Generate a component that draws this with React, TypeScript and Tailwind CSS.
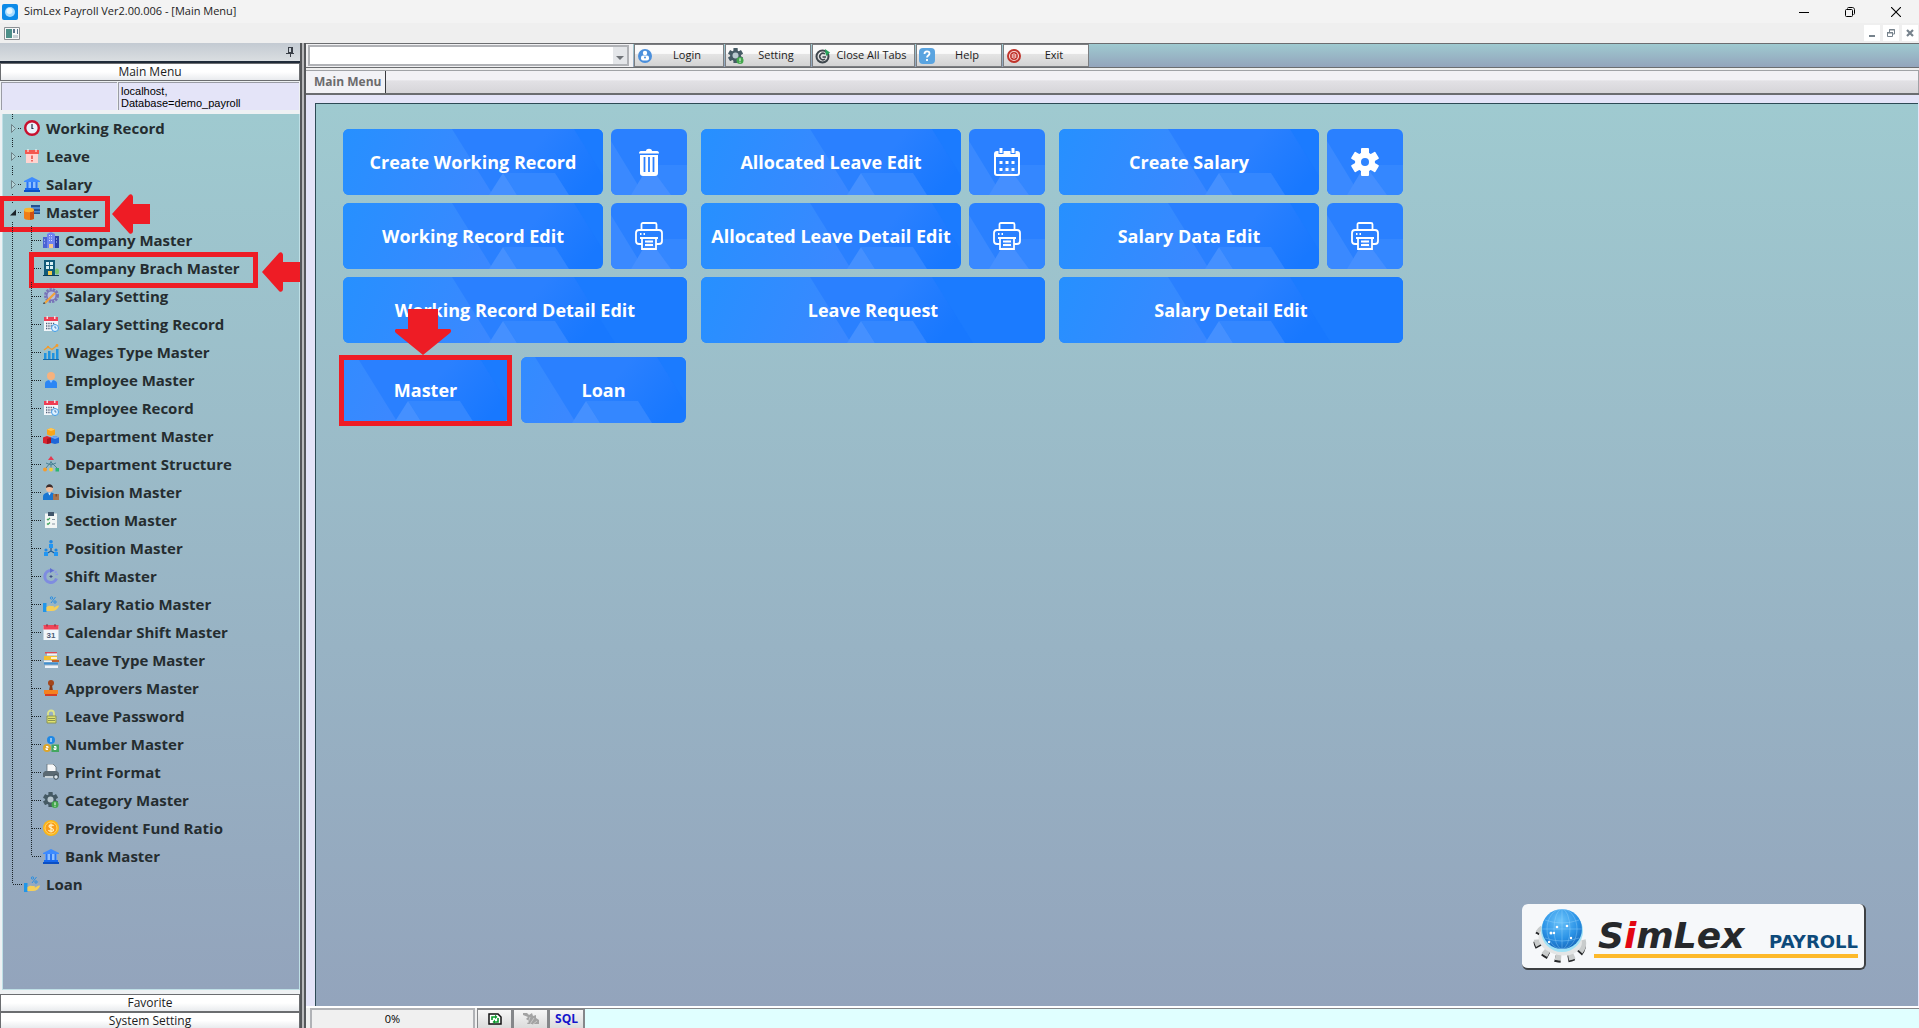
import type { ReactNode } from "react";
import clsx from "clsx";

const gearTeeth = (fill: string) => (
  <g fill={fill}>
    <circle cx="14" cy="14" r="10" />
    <rect x="10" y="0" width="8" height="28" rx="1" />
    <rect x="10" y="0" width="8" height="28" rx="1" transform="rotate(60 14 14)" />
    <rect x="10" y="0" width="8" height="28" rx="1" transform="rotate(120 14 14)" />
  </g>
);

const bank = (
  <>
    <path d="M8 1 16 5v1H0V5z" fill="#3d8bff" />
    <path d="M2 6h12v7H2z" fill="#8fc0ff" />
    <path d="M2.500 6h2v7h-2zM7 6h2v7H7zM11.500 6h2v7h-2z" fill="#2b76f2" />
    <path d="M1 12h14v2H1z" fill="#1668ee" />
    <path d="M0 14h16v2H0z" fill="#0b4fc4" />
  </>
);

const calendarClock = (
  <>
    <path d="M1 3h14v12H1z" fill="#f3f7fb" />
    <path d="M1 1h14v4H1z" fill="#ee3e54" />
    <path d="M3.500 0h1.500v3H3.500zM11 0h1.500v3H11z" fill="#f7d9de" />
    <path d="M3 7.500h9M3 10h7M3 12.500h5" stroke="#53617a" strokeWidth="1.300" strokeDasharray="1.300 1" />
    <circle cx="12" cy="12" r="3.500" fill="#dff1ff" stroke="#3f9be6" />
    <path d="M12 10v2h1.500" stroke="#2d6cb0" fill="none" strokeWidth=".8" />
  </>
);

const handPercent = (
  <>
    <path d="M0 7h3.500v9H0z" fill="#2196e8" />
    <path d="M3.500 11c3-2 4-1 6-1s2 1 1 2c3-2 4.500-3 5.500-2-1 3-4 5-7 5H3.500z" fill="#f5cf58" />
    <circle cx="8.500" cy="2" r="1.200" fill="none" stroke="#2d8fe0" />
    <circle cx="12" cy="6" r="1.200" fill="none" stroke="#2d8fe0" />
    <path d="M12.500 1 8 7" stroke="#2d8fe0" />
  </>
);

const gearAlert = (
  <>
    <g transform="scale(.54)">{gearTeeth("#455a64")}</g>
    <circle cx="7.500" cy="7.500" r="3" fill="#b9c8cf" />
    <circle cx="12" cy="12.500" r="3.500" fill="#43a74c" />
    <path d="M12 10.300v2.700M12 13.700v1" stroke="#fff" />
  </>
);

const icons: Record<string, ReactNode> = {
  clock: (
    <>
      <circle cx="8" cy="8" r="6.800" fill="#e9f2fb" stroke="#c8102e" strokeWidth="2.400" />
      <path d="M8 4v4.500h1.500" stroke="#25334a" strokeWidth="1.200" fill="none" />
    </>
  ),
  leave: (
    <>
      <path d="M2 3h12v12H2z" fill="#ffd4d1" />
      <path d="M1 2h14v4H1z" fill="#f4574f" />
      <path d="M4 1v3M12 1v3" stroke="#fff" />
      <path d="M8 7.500v3.500M8 12v1.500" stroke="#e3342b" strokeWidth="1.300" />
    </>
  ),
  bank,
  master: (
    <>
      <path d="M7 1h9v9H7z" fill="#24508f" />
      <path d="M7 3h9v2H7zM10 7h6v1.500h-6z" fill="#4e87cf" />
      <path d="M0 6v8c0 2.500 10 2.500 10 0V6z" fill="#ef7d17" />
      <path d="M6 7h4v8l-4 1z" fill="#cf4f12" />
      <ellipse cx="5" cy="6" rx="5" ry="2.200" fill="#fbb32e" />
    </>
  ),
  company: (
    <>
      <path d="M0 5h6v11H0z" fill="#4a63d3" />
      <path d="M10 4h6v12h-6z" fill="#2b3fa8" />
      <path d="M4 2 8 0l4 2v14H4z" fill="#6f83f0" />
      <path d="M6 3.500h4M6 6h4M6 8.500h4M1 8h2M1 11h2M13 7h2M13 10h2" stroke="#d5dcff" strokeDasharray="1 1" />
      <path d="M6 12h4v4H6z" fill="#f6c889" />
    </>
  ),
  branch: (
    <>
      <path d="M1 0h11v15H1z" fill="#0f5a78" />
      <path d="M3 2h3v3H3zM7 2h3v3H7zM3 6h3v3H3zM7 6h3v3H7z" fill="#d9f1f5" />
      <path d="M5 11h4v5H5z" fill="#f2c94c" />
      <path d="M0 15h16v1H0z" fill="#0b3f57" />
      <ellipse cx="14" cy="11.500" rx="2" ry="3" fill="#7ac36a" />
    </>
  ),
  salarySetting: (
    <>
      <circle cx="8.500" cy="7.500" r="6" fill="none" stroke="#7873b8" strokeWidth="3" strokeDasharray="2.200 1" />
      <circle cx="8.500" cy="7.500" r="4.700" fill="#b7bfe0" stroke="#7873b8" strokeWidth="1.500" />
      <path d="m2 15 10-10" stroke="#f2a23a" strokeWidth="2.200" />
      <path d="m0 16 2.500-.500-1.500-1.500z" fill="#333" />
    </>
  ),
  calendarClock,
  chart: (
    <>
      <path d="M1 9h2.500v6H1zM5 7h2.500v8H5zM9 9h2.500v6H9zM13 5h2.500v10H13z" fill="#1f93e0" />
      <path d="M0 15h16v1H0z" fill="#1668a8" />
      <path d="M1 6 5 3l4 2.500L14.500 1" stroke="#f39c2d" strokeWidth="1.400" fill="none" />
      <circle cx="5" cy="3" r="1.200" fill="#f39c2d" />
      <circle cx="14" cy="1.500" r="1.400" fill="#f39c2d" />
    </>
  ),
  employee: (
    <>
      <circle cx="8" cy="4" r="4" fill="#f6b27e" />
      <path d="M2 16v-4c0-3 2-4 6-4s6 1 6 4v4z" fill="#2b86f5" />
      <path d="M6 8h4l-2 3z" fill="#8cc2ff" />
    </>
  ),
  blocks: (
    <>
      <path d="m8 0 4 1.500v5L8 8 4 6.500v-5z" fill="#f8a51b" />
      <path d="m8 0 4 1.500L8 3 4 1.500z" fill="#ffc857" />
      <path d="m4 8 4 1.500V15l-4 1-4-1V9.500z" fill="#d8202d" />
      <path d="m12 8 4 1.500V15l-4 1-4-1V9.500z" fill="#1f66d8" />
      <path d="m12 8 4 1.500L12 11 8 9.500z" fill="#6aa6ff" />
      <path d="m4 11 4-1.500V15l-4 1z" fill="#a8121f" />
    </>
  ),
  structure: (
    <>
      <path d="M8 5v7M8 6 3 12M8 6l6 6M3 7l5 2 5-2" stroke="#4c8396" fill="none" />
      <path d="m8 0 3 4H5z" fill="#e53950" />
      <circle cx="2" cy="13.500" r="2" fill="#f59b2c" />
      <circle cx="8" cy="13.500" r="2" fill="#f2cd3c" />
      <path d="M12.500 12H16v3.500h-3.500z" fill="#2bb673" />
    </>
  ),
  division: (
    <>
      <circle cx="6.500" cy="4.500" r="3.500" fill="#f2bfa0" />
      <path d="M3 4c0-5 7-5 7 0-2-1-5-1.500-7 0z" fill="#3a2c2c" />
      <path d="M0 16v-3c0-3 2-4.500 6.500-4.500S12 10 12 13v3z" fill="#1976d2" />
      <path d="m5 8.500 1.500 3 1.500-3z" fill="#e6eef7" />
      <path d="M10 10h6v6h-6z" fill="#a9744f" />
      <path d="M12.500 10h1.500v2.500h-1.500z" fill="#7b4f31" />
    </>
  ),
  section: (
    <>
      <path d="M2 1.500h12V16H2z" fill="#f2f6f5" />
      <path d="M5 0h6v4H5z" fill="#41566b" />
      <path d="m4 7 1 1 2-2M4 11.500l1 1 2-2" stroke="#3fa35a" fill="none" strokeWidth="1.200" />
      <path d="M9 7.500h3M9 12h3" stroke="#8795a1" />
    </>
  ),
  position: (
    <>
      <path d="M8 8v3l-5 3M8 11l5 3" stroke="#1c5a94" strokeWidth="1.200" fill="none" />
      <circle cx="8" cy="1.800" r="1.800" fill="#1e88e5" />
      <path d="M6 4h4v4H6zM1 12h4v4H1zM11 12h4v4h-4z" fill="#2196f3" />
      <circle cx="3" cy="10" r="1.600" fill="#1e88e5" />
      <circle cx="13" cy="10" r="1.600" fill="#1e88e5" />
    </>
  ),
  shift: (
    <>
      <path d="M8 2.500a6 6 0 1 0 5.500 8" stroke="#7f8ce0" strokeWidth="3" fill="none" />
      <path d="M10 2.300a6 6 0 0 1 4 6" stroke="#8d99e6" strokeWidth="2.400" strokeDasharray="1.500 1" fill="none" />
      <path d="m7 0 4 2.500L7 5z" fill="#5e6ed0" />
      <path d="M8 7v3M6.500 8.500h3" stroke="#3d4d86" />
    </>
  ),
  handPercent,
  calendar31: (
    <>
      <path d="M.5 2h15v14H.5z" fill="#f0f6fb" />
      <path d="M.5 1h15v4.500H.5z" fill="#ef4458" />
      <path d="M4 0v2.500M12 0v2.500" stroke="#7e2d39" />
      <text x="8" y="13.500" textAnchor="middle" fontSize="8" fontWeight="bold" fill="#4a5b75" fontFamily="Liberation Sans, sans-serif">
        31
      </text>
    </>
  ),
  books: (
    <>
      <path d="M2 0h12v1.500H2z" fill="#de4b55" />
      <path d="M4 1.500h10v2H4z" fill="#f4f4f4" />
      <path d="M1 4h13v4H1z" fill="#f4c02e" />
      <path d="M8 5h6v2H8z" fill="#fff3cf" />
      <path d="M8 8h8v2H8z" fill="#c0622e" />
      <path d="M1 8.500h8V10H1z" fill="#f4f4f4" />
      <path d="M1 10.500h14v2H1z" fill="#3f8fd0" />
      <path d="M2 13.500h13V16H2z" fill="#eef3f8" />
    </>
  ),
  stamp: (
    <>
      <circle cx="8" cy="3" r="3" fill="#a3461b" />
      <path d="M7 5h2l1 6H6z" fill="#8c3913" />
      <path d="M1 10h14v4H1z" fill="#f58220" />
      <path d="M2 14h12v2H2z" fill="#d63e24" />
    </>
  ),
  lock: (
    <>
      <path d="M5 8V5.500a3 3 0 0 1 6 0V8" stroke="#dfe58a" strokeWidth="1.800" fill="none" />
      <path d="M4 8h9v7H4z" fill="#e0e36f" stroke="#8b9453" />
      <path d="M5 10.500h7M5 12.500h7" stroke="#8b9453" />
    </>
  ),
  numbers: (
    <>
      <circle cx="8" cy="4" r="4" fill="#1e88e5" />
      <circle cx="4" cy="12" r="4" fill="#dca62c" />
      <path d="M8.500 8.500H16V16H8.500z" fill="#43a760" />
      <path d="M8 2v4M3 10.500h2v1.500H3v1.500h2M11 10.500h2v3h-2v-1.500h2" stroke="#fff" fill="none" />
    </>
  ),
  printer: (
    <>
      <path d="M4 0h6l3 3v5H4z" fill="#f7f9fa" stroke="#56646d" strokeWidth=".7" />
      <path d="M2 7h12l2 2v4H0V9z" fill="#5b6a73" />
      <path d="M2 12h10v2H2z" fill="#c9d3d8" />
      <circle cx="13" cy="13" r="2.300" fill="#dbe6ec" stroke="#33434d" />
    </>
  ),
  gearAlert,
  coin: (
    <>
      <circle cx="8" cy="8" r="8" fill="#fbb515" />
      <circle cx="8" cy="8" r="6" fill="#f99d1c" stroke="#ffd766" />
      <path d="M10.500 6c-.5-1.500-4.500-1.500-4.500.300S10.500 8 10.500 10 6 11.500 5.500 10M8 3.500v9" stroke="#fff3c4" strokeWidth="1.200" fill="none" />
    </>
  ),
  user: (
    <>
      <circle cx="8" cy="8" r="7" fill="#4a8fdc" />
      <circle cx="8" cy="5" r="2.200" fill="#fff" />
      <rect x="4" y="7.500" width="8" height="5" rx="2" fill="#fff" />
      <circle cx="8" cy="9.500" r="1" fill="#4a8fdc" />
    </>
  ),
  closeTabs: (
    <>
      <circle cx="7.500" cy="8.500" r="6" fill="none" stroke="#3f474d" strokeWidth="2" />
      <path d="M11 9H7.500M10 11a3.200 3.200 0 1 1 0-5" stroke="#3f474d" strokeWidth="1.500" fill="none" />
      <path d="m10 1 5 3.500-4 3.500z" fill="#27a35a" />
    </>
  ),
  help: (
    <>
      <rect width="16" height="16" rx="4" fill="#5aa4e0" />
      <path d="M5.500 6c0-3.500 5-3.500 5-.5 0 2-2.500 2-2.500 4M8 11v2" stroke="#fff" strokeWidth="1.800" fill="none" />
    </>
  ),
  exit: (
    <>
      <circle cx="8" cy="8" r="7" fill="#c0342b" />
      <circle cx="8" cy="8" r="4.500" fill="none" stroke="#f6d5d2" strokeWidth="1.200" />
      <path d="M8 5v6M6.300 6v4M9.700 6v4" stroke="#f6d5d2" />
    </>
  ),
};

function Icon({ name }: { name: string }) {
  return (
    <svg viewBox="0 0 16 16" className="size-4 shrink-0" aria-hidden="true">
      {icons[name]}
    </svg>
  );
}

const masterItems = [
  { label: "Company Master", icon: "company" },
  { label: "Company Brach Master", icon: "branch", marked: true },
  { label: "Salary Setting", icon: "salarySetting" },
  { label: "Salary Setting Record", icon: "calendarClock" },
  { label: "Wages Type Master", icon: "chart" },
  { label: "Employee Master", icon: "employee" },
  { label: "Employee Record", icon: "calendarClock" },
  { label: "Department Master", icon: "blocks" },
  { label: "Department Structure", icon: "structure" },
  { label: "Division Master", icon: "division" },
  { label: "Section Master", icon: "section" },
  { label: "Position Master", icon: "position" },
  { label: "Shift Master", icon: "shift" },
  { label: "Salary Ratio Master", icon: "handPercent" },
  { label: "Calendar Shift Master", icon: "calendar31" },
  { label: "Leave Type Master", icon: "books" },
  { label: "Approvers Master", icon: "stamp" },
  { label: "Leave Password", icon: "lock" },
  { label: "Number Master", icon: "numbers" },
  { label: "Print Format", icon: "printer" },
  { label: "Category Master", icon: "gearAlert" },
  { label: "Provident Fund Ratio", icon: "coin" },
  { label: "Bank Master", icon: "bank" },
];

const dots = { stroke: "#1b2429", strokeDasharray: "1 1", shapeRendering: "crispEdges" } as const;

function RootGuide({ state }: { state: "closed" | "open" | "leaf" }) {
  return (
    <svg viewBox="0 0 21 28" className="h-7 w-[21px] shrink-0" aria-hidden="true">
      {state === "leaf" ? (
        <path d="M9.500 0v14M10 14.500h9" fill="none" {...dots} />
      ) : (
        <path d="M9.500 0v5M9.500 24v4M15 14.500h4" fill="none" {...dots} />
      )}
      {state === "closed" && <path d="M8.500 10.500v8l4-4z" fill="#b5d6da" stroke="#6d8288" />}
      {state === "open" && <path d="M13 11.500v6H7z" fill="#1b2429" />}
    </svg>
  );
}

function ChildGuide({ last }: { last: boolean }) {
  return (
    <svg viewBox="0 0 40 28" className="h-7 w-10 shrink-0" aria-hidden="true">
      <path d={last ? "M9.500 0v28M28.500 0v14M29 14.500h9" : "M9.500 0v28M28.500 0v28M29 14.500h9"} fill="none" {...dots} />
    </svg>
  );
}

function LeftArrow({ className }: { className: string }) {
  return (
    <svg viewBox="0 0 38 40" className={clsx("pointer-events-none absolute z-10 h-10 w-[38px]", className)} aria-hidden="true">
      <path d="M0 20 17 1c2-2 4 0 4 2v7h17v20H21v7c0 2-2 4-4 2z" fill="#ee1c25" />
    </svg>
  );
}

function RowButton({ icon, label }: { icon: string; label: string }) {
  return (
    <button type="button" className="flex h-7 items-center gap-1.5 text-[15px] font-bold whitespace-nowrap text-[#252d30]">
      <Icon name={icon} />
      {label}
    </button>
  );
}

function Tree() {
  return (
    <ul>
      <li className="flex">
        <RootGuide state="closed" />
        <RowButton icon="clock" label="Working Record" />
      </li>
      <li className="flex">
        <RootGuide state="closed" />
        <RowButton icon="leave" label="Leave" />
      </li>
      <li className="flex">
        <RootGuide state="closed" />
        <RowButton icon="bank" label="Salary" />
      </li>
      <li>
        <div className="relative flex">
          <RootGuide state="open" />
          <RowButton icon="master" label="Master" />
          <span className="pointer-events-none absolute -top-0.5 -left-1 h-9 w-[111px] border-5 border-[#ee1c25]" />
          <LeftArrow className="-top-1 left-[109px]" />
        </div>
        <ul>
          {masterItems.map((item, i) => (
            <li key={item.label} className="relative flex">
              <ChildGuide last={i === masterItems.length - 1} />
              <RowButton icon={item.icon} label={item.label} />
              {item.marked && (
                <>
                  <span className="pointer-events-none absolute -top-0.5 left-[26px] h-9 w-[229px] border-5 border-[#ee1c25]" />
                  <LeftArrow className="-top-0.5 left-[259px]" />
                </>
              )}
            </li>
          ))}
        </ul>
      </li>
      <li className="flex">
        <RootGuide state="leaf" />
        <RowButton icon="handPercent" label="Loan" />
      </li>
    </ul>
  );
}

function PanelButton({ children, className }: { children: ReactNode; className?: string }) {
  return (
    <button
      type="button"
      className={clsx(
        "flex w-full shrink-0 items-center justify-center border border-[#6b6d70] bg-linear-to-b from-white from-50% to-[#e9ebee] text-xs text-[#1c1c1c]",
        className ?? "h-[18px]",
      )}
    >
      {children}
    </button>
  );
}

function Sidebar() {
  return (
    <aside className="flex w-[300px] shrink-0 flex-col bg-[#eef1f3]">
      <div className="flex h-5 shrink-0 items-center justify-end border-b-2 border-[#1f2a38] bg-linear-to-b from-[#c3cad2] to-[#dadee1] pr-1.5">
        <button type="button" aria-label="Pin panel">
          <svg viewBox="0 0 8 10" className="h-2.5 w-2" aria-hidden="true">
            <path d="M2 .5h4v5H2zM5 .5v5M0 6h8M4 6v4" stroke="#3a3f47" fill="none" shapeRendering="crispEdges" />
          </svg>
        </button>
      </div>
      <PanelButton>Main Menu</PanelButton>
      <div className="flex h-[33px] shrink-0 gap-px p-px pb-1 font-['Liberation_Sans',sans-serif] text-[11px] leading-3 text-black">
        <div className="w-[116px] border-t border-l border-[#9a9ca5] bg-[#e4e4f8]" />
        <div className="flex-1 border-t border-l border-[#9a9ca5] bg-[#e4e4f8] pt-0.5 pl-0.5">
          localhost,
          <br />
          Database=demo_payroll
        </div>
      </div>
      <div className="mb-1 ml-0.5 min-h-0 flex-1 border border-t-0 border-[#bfe0e6] bg-linear-to-b from-[#9fcad0] to-[#93a4bc]">
        <Tree />
      </div>
      <PanelButton>Favorite</PanelButton>
      <PanelButton className="h-4 border-b-0 leading-[15px]">System Setting</PanelButton>
    </aside>
  );
}

const toolButtons = [
  { label: "Login", icon: "user", width: "w-[90px]" },
  { label: "Setting", icon: "gearAlert", width: "w-[86px]" },
  { label: "Close All Tabs", icon: "closeTabs", width: "w-[103px]" },
  { label: "Help", icon: "help", width: "w-[86px]" },
  { label: "Exit", icon: "exit", width: "w-[86px]" },
];

function Toolbar() {
  return (
    <div className="flex h-[25px] shrink-0 gap-px border-y border-[#6b6d70] bg-linear-to-b from-[#9fcad0] to-[#93a4bc]">
      <div className="relative flex w-[327px] bg-[#f1f1f3] py-px pr-1 pl-0.5">
        <select
          aria-label="Search"
          className="w-full appearance-none border-2 border-[#b0b2b6] bg-white bg-[linear-gradient(#e4e6e9,#e4e6e9)] bg-[length:14px_100%] bg-right bg-no-repeat text-xs"
        />
        <svg viewBox="0 0 8 4" className="pointer-events-none absolute top-1/2 right-[9px] h-1 w-2" aria-hidden="true">
          <path d="M0 0h8L4 4z" fill="#6f7378" />
        </svg>
      </div>
      {toolButtons.map((b) => (
        <button
          key={b.label}
          type="button"
          className={clsx(
            "flex items-center border border-[#7b7d80] bg-linear-to-b from-[#fafafa] from-40% via-[#e4e4e4] via-45% to-[#d3d3d3] px-0.5 text-[11px] text-[#1c1c1c]",
            b.width,
          )}
        >
          <Icon name={b.icon} />
          <span className="flex-1 text-center whitespace-nowrap">{b.label}</span>
        </button>
      ))}
    </div>
  );
}

function TileArt({ shift, width }: { shift: number; width: number }) {
  return (
    <svg
      viewBox={`${shift} 0 ${width} 66`}
      preserveAspectRatio="xMinYMin slice"
      className="absolute inset-0 size-full"
      aria-hidden="true"
    >
      <path d="M0 0h460v66H0z" fill="url(#tileStripe)" />
      <path d="M231 0h229v66H272z" fill="#1b7bff" />
      <path d="M0 0h109l41 66H0z" fill="url(#tileGlow)" />
      <path d="M160 44h52l14 22h-52z" fill="#3487ff" />
      <path d="m160 44 14 22h-28z" fill="#4590ff" />
    </svg>
  );
}

// the square tiles show the middle of the pattern without its dark end
function IconTileArt() {
  return (
    <svg viewBox="0 0 76 66" preserveAspectRatio="xMinYMin slice" className="absolute inset-0 size-full" aria-hidden="true">
      <path d="M0 0h76v66H0z" fill="#2a80ff" />
      <path d="m0 12 33 54H0z" fill="#3a89ff" />
      <path d="M38 36h38v30H38z" fill="#3487ff" />
      <path d="m38 36 22 30H20z" fill="#458fff" />
    </svg>
  );
}

const tileIcons: Record<string, ReactNode> = {
  trash: (
    <>
      <path d="M4 5.500C4 3.500 5 3 7 3h4c0-3 6-3 6 0h4c2 0 3 .500 3 2.500z" fill="#fff" />
      <path d="M5 7h18v18c0 2-1 3-3 3H8c-2 0-3-1-3-3z" fill="#fff" />
      <path d="M9.500 9v15M14 9v15M18.500 9v15" stroke="#2a80ff" strokeWidth="1.800" />
    </>
  ),
  calendar: (
    <>
      <rect x="2" y="4" width="24" height="23" rx="2" fill="none" stroke="#fff" strokeWidth="2" />
      <path d="M2 4h24v5H2z" fill="#fff" />
      <path d="M8 0v6M20 0v6" stroke="#2a80ff" strokeWidth="5" />
      <path d="M8 0v5M20 0v5" stroke="#fff" strokeWidth="3" />
      <path d="M6.500 13h3v3h-3zM12.500 13h3v3h-3zM18.500 13h3v3h-3zM6.500 20h3v3h-3zM12.500 20h3v3h-3zM18.500 20h3v3h-3z" fill="#fff" />
    </>
  ),
  gear: (
    <>
      {gearTeeth("#fff")}
      <circle cx="14" cy="14" r="4" fill="#2f84ff" />
    </>
  ),
  printer: (
    <g fill="none" stroke="#fff" strokeWidth="1.800">
      <path d="M6.500 8V2.500c0-1 .5-1.500 1.500-1.500h12c1 0 1.500.5 1.500 1.500V8" />
      <path d="M7 22H4c-2 0-3-1-3-3v-8c0-2 1-3 3-3h20c2 0 3 1 3 3v8c0 2-1 3-3 3h-3" />
      <path d="M5 16h18M7 16v11h14V16M10 19.500h8M10 23h8" />
      <path d="M5 12h1.500M8.500 12H10" />
    </g>
  ),
};

function Tile({ label, size }: { label: string; size: "full" | "main" | "half" }) {
  return (
    <button
      type="button"
      className={clsx(
        "relative flex h-[66px] items-center justify-center overflow-hidden rounded-md text-lg font-bold whitespace-nowrap text-white",
        size === "main" ? "w-[260px]" : "flex-1",
      )}
    >
      {size === "full" && <TileArt shift={0} width={344} />}
      {size === "main" && <TileArt shift={0} width={260} />}
      {size === "half" && <TileArt shift={95} width={165} />}
      <span className="relative">{label}</span>
    </button>
  );
}

function IconTile({ icon, label }: { icon: string; label: string }) {
  return (
    <button
      type="button"
      aria-label={label}
      className="relative flex h-[66px] flex-1 items-center justify-center overflow-hidden rounded-md"
    >
      <IconTileArt />
      <svg viewBox="0 0 28 28" className="relative size-7" aria-hidden="true">
        {tileIcons[icon]}
      </svg>
    </button>
  );
}

const groups = [
  {
    rows: [
      { label: "Create Working Record", icon: "trash", iconLabel: "Delete working record" },
      { label: "Working Record Edit", icon: "printer", iconLabel: "Print working record" },
    ],
    last: "Working Record Detail Edit",
  },
  {
    rows: [
      { label: "Allocated Leave Edit", icon: "calendar", iconLabel: "Leave calendar" },
      { label: "Allocated Leave Detail Edit", icon: "printer", iconLabel: "Print leave" },
    ],
    last: "Leave Request",
  },
  {
    rows: [
      { label: "Create Salary", icon: "gear", iconLabel: "Salary options" },
      { label: "Salary Data Edit", icon: "printer", iconLabel: "Print salary" },
    ],
    last: "Salary Detail Edit",
  },
];

function Logo() {
  return (
    <div className="flex items-center gap-1.5 rounded-md border-r-2 border-b-2 border-[#3d4043] bg-[#f6f8fa] py-[5px] pr-1.5 pl-2.5">
      <svg viewBox="0 0 56 54" className="h-[54px] w-14 shrink-0" aria-hidden="true">
        <g transform="rotate(12 28 32)">
          <ellipse cx="28" cy="34" rx="23" ry="16" fill="none" stroke="#26282a" strokeWidth="7" strokeDasharray="6 7" />
          <ellipse cx="28" cy="32" rx="23" ry="16" fill="none" stroke="#c9cccc" strokeWidth="7" strokeDasharray="6 7" />
          <ellipse cx="28" cy="31" rx="22" ry="15" fill="#e3e5e5" />
        </g>
        <circle cx="30" cy="22" r="21" fill="#9fe2f7" />
        <circle cx="30" cy="20" r="20" fill="url(#globeBlue)" />
        <g fill="none" stroke="#a5dcff" strokeWidth=".5" opacity=".7">
          <ellipse cx="30" cy="20" rx="8" ry="20" />
          <ellipse cx="30" cy="20" rx="15" ry="20" />
          <path d="M30 0v40M10 20h40M13 11q17 6 34 0M13 29q17 6 34 0" />
        </g>
        <g fill="#fff">
          <circle cx="25" cy="18" r="1.300" />
          <circle cx="35" cy="17" r="1.300" />
          <circle cx="19" cy="24" r="1.500" />
          <circle cx="22" cy="24" r="1.200" />
          <circle cx="39" cy="29" r="1.200" />
          <circle cx="17" cy="33" r="1.200" />
        </g>
      </svg>
      <div className="flex w-[264px] flex-col items-end pt-1">
        <p className="flex w-full items-baseline justify-between pl-1 font-['DejaVu_Sans',sans-serif] font-bold">
          <span className="text-4xl leading-9 text-[#26282b] italic">
            S<span className="text-[#e30613]">i</span>mLex
          </span>
          <span className="text-lg leading-5 text-[#0d4a7a]">PAYROLL</span>
        </p>
        <span className="h-1 w-full bg-[#fdb92a]" />
      </div>
    </div>
  );
}

function MainMenu() {
  return (
    <main className="flex min-h-0 flex-1 flex-col border-t-2 border-[#6b6d70] bg-[#e4e4f8] pt-2 pr-px pl-[9px]">
      <div className="flex flex-1 flex-col justify-between border-t border-l border-[#2d4a55] bg-linear-to-b from-[#9fcad0] to-[#93a4bc] pt-[25px] pl-[27px]">
        <div>
          <div className="flex flex-wrap gap-[14px]">
            {groups.map((group) => (
              <section key={group.last} className="flex w-[344px] flex-col gap-2">
                {group.rows.map((row) => (
                  <div key={row.label} className="flex gap-2">
                    <Tile label={row.label} size="main" />
                    <IconTile icon={row.icon} label={row.iconLabel} />
                  </div>
                ))}
                <div className="flex">
                  <Tile label={group.last} size="full" />
                </div>
              </section>
            ))}
          </div>
          <div className="mt-[14px] flex w-[343px] gap-[13px]">
            <div className="relative flex flex-1">
              <Tile label="Master" size="half" />
              <span className="pointer-events-none absolute -inset-x-1 -top-0.5 -bottom-[3px] border-5 border-[#ee1c25]" />
              <svg
                viewBox="0 0 56 46"
                className="pointer-events-none absolute bottom-full left-[52px] z-10 mb-0.5 h-[46px] w-14"
                aria-hidden="true"
              >
                <path d="M13 0h30v20h11c2 0 3 2 1 4L28 46 1 24c-2-2-1-4 1-4h11z" fill="#ee1c25" />
              </svg>
            </div>
            <Tile label="Loan" size="half" />
          </div>
        </div>
        <div className="flex justify-end pr-[52px] pb-9">
          <Logo />
        </div>
      </div>
    </main>
  );
}

const statusButton =
  "flex h-6 w-9 items-center justify-center border-t-2 border-r-2 border-l border-[#85878a] bg-linear-to-b from-[#f6f6f6] to-[#d6d6d6] pb-1";

function StatusBar() {
  return (
    <footer className="flex h-[22px] shrink-0 overflow-hidden border-t-2 border-white bg-[#e0ffff]">
      <div className="flex w-[171px] justify-center bg-[#f0f0f0] pr-0.5 pl-1 text-xs">
        <div className="h-6 w-full border-2 border-[#b0b2b6] text-center text-[11px] leading-[18px]">0%</div>
      </div>
      <button type="button" aria-label="Refresh" className={statusButton}>
        <svg viewBox="0 0 14 12" className="h-3 w-3.5" aria-hidden="true">
          <path d="M1 1h9l3 3v7H1z" fill="#fff" stroke="#111" strokeWidth="1.500" />
          <path d="M4 7V4h4M10 5v4H6" stroke="#0a9a2c" strokeWidth="1.600" fill="none" />
          <path d="m7 1.500 2.500 2.500L7 6zM7 6.500 4.500 9 7 11z" fill="#0a9a2c" />
        </svg>
      </button>
      <button type="button" aria-label="Colors" className={statusButton}>
        <svg viewBox="0 0 16 12" className="h-3 w-4" aria-hidden="true">
          <path d="M0 0h4l2 2 3-2 1 3 3-1v3l3 2v4H4l2-3-3-2 2-2-5-2z" fill="#a3a3a3" />
          <path d="m5 10 2-6M7 11l4-6M9 12l5-4" stroke="#c9c9c9" />
        </svg>
      </button>
      <button type="button" className={clsx(statusButton, "text-xs font-bold text-[#1414cc]")}>
        SQL
      </button>
      <div className="flex-1 border-t border-[#85878a]" />
    </footer>
  );
}

function TitleBar() {
  return (
    <header className="shrink-0">
      <div className="flex h-[23px] items-center gap-1.5 bg-[#f3f3f3] pl-0.5 text-[11px] text-[#1c1c1c]">
        <svg viewBox="0 0 16 16" className="size-4" aria-hidden="true">
          <rect width="16" height="16" rx="2" fill="#0c8ae8" />
          <circle cx="8" cy="8" r="5" fill="#a8dcff" />
          <circle cx="7.500" cy="7" r="3" fill="#e6f6ff" />
        </svg>
        <h1 className="flex-1">SimLex Payroll Ver2.00.006 - [Main Menu]</h1>
        <div className="flex items-center gap-9 pr-[18px] text-black">
          <button type="button" aria-label="Minimize">
            <svg viewBox="0 0 10 10" className="size-2.5">
              <path d="M0 5.500h10" stroke="currentColor" />
            </svg>
          </button>
          <button type="button" aria-label="Restore">
            <svg viewBox="0 0 10 10" className="size-2.5" fill="none" stroke="currentColor">
              <rect x=".5" y="2.500" width="7" height="7" rx="1" />
              <path d="M2.500 1.500c0-.6.400-1 1-1h4c1 0 2 1 2 2v4c0 .6-.4 1-1 1" />
            </svg>
          </button>
          <button type="button" aria-label="Close">
            <svg viewBox="0 0 10 10" className="size-2.5">
              <path d="m0 0 10 10M10 0 0 10" stroke="currentColor" strokeWidth="1.100" />
            </svg>
          </button>
        </div>
      </div>
      <div className="flex h-5 items-center justify-between bg-[#efefef] pr-px pl-1">
        <svg viewBox="0 0 16 13" className="h-[13px] w-4" aria-hidden="true">
          <path d="M.5.5h15v12H.5z" fill="#f7f8f8" stroke="#8b9094" />
          <path d="M2 2h6v9H2z" fill="#4c8f88" />
          <path d="M9 2h2v4H9zM13 2h1v5h-1z" fill="#57758c" />
          <path d="M9 8h5v3H9z" fill="#c8d2d6" />
        </svg>
        <div className="flex gap-[3px] text-[#76828c]">
          <button type="button" aria-label="Minimize window" className="flex size-4 items-center justify-center bg-white">
            <svg viewBox="0 0 8 8" className="size-2">
              <path d="M1 6h6v2H1z" fill="currentColor" />
            </svg>
          </button>
          <button type="button" aria-label="Restore window" className="flex size-4 items-center justify-center bg-white">
            <svg viewBox="0 0 8 8" className="size-2" fill="none" stroke="currentColor">
              <path d="M.5 4h5v3.500h-5zM0 3.500h6M2.500 3V.5h5V5H6M2 1h6" />
            </svg>
          </button>
          <button type="button" aria-label="Close window" className="flex size-4 items-center justify-center bg-white">
            <svg viewBox="0 0 8 8" className="size-2">
              <path d="m1 1 6 6M7 1 1 7" stroke="currentColor" strokeWidth="2.200" />
            </svg>
          </button>
        </div>
      </div>
    </header>
  );
}

export default function App() {
  return (
    <div className="flex h-screen flex-col overflow-hidden bg-[#efefef] font-['Open_Sans','Noto_Sans',sans-serif]">
      {/* gradients shared by the tiles and the logo */}
      <svg className="absolute size-0" aria-hidden="true">
        <defs>
          <linearGradient id="tileGlow" gradientUnits="userSpaceOnUse" x1="0" y1="0" x2="140" y2="60">
            <stop offset="0" stopColor="#2690ff" />
            <stop offset="1" stopColor="#3b88ff" />
          </linearGradient>
          <linearGradient id="tileStripe" gradientUnits="userSpaceOnUse" x1="190" y1="20" x2="240" y2="62">
            <stop offset="0" stopColor="#2a80ff" />
            <stop offset="1" stopColor="#1878ff" />
          </linearGradient>
          <radialGradient id="globeBlue" cx=".45" cy=".3" r=".75">
            <stop offset="0" stopColor="#6cc4fb" />
            <stop offset=".6" stopColor="#2a92e6" />
            <stop offset="1" stopColor="#1464b8" />
          </radialGradient>
        </defs>
      </svg>
      <TitleBar />
      <div className="flex min-h-0 flex-1">
        <Sidebar />
        <div className="w-[6px] shrink-0 border-x-2 border-[#55575a] bg-[#b9b9bb]" />
        <div className="flex min-w-0 flex-1 flex-col">
          <Toolbar />
          <nav className="mt-0.5 flex h-[23px] shrink-0 border-t border-r border-[#a0a2a6] bg-linear-to-b from-[#f2f1f5] from-40% via-[#e2e1e5] via-45% to-[#d6d5d9]">
            <button
              type="button"
              className="h-[22px] border-r border-[#3a3c40] bg-[#f2f2f6] pr-1 pl-2 text-xs font-bold text-[#6b6b6d]"
            >
              Main Menu
            </button>
          </nav>
          <MainMenu />
          <StatusBar />
        </div>
      </div>
    </div>
  );
}
